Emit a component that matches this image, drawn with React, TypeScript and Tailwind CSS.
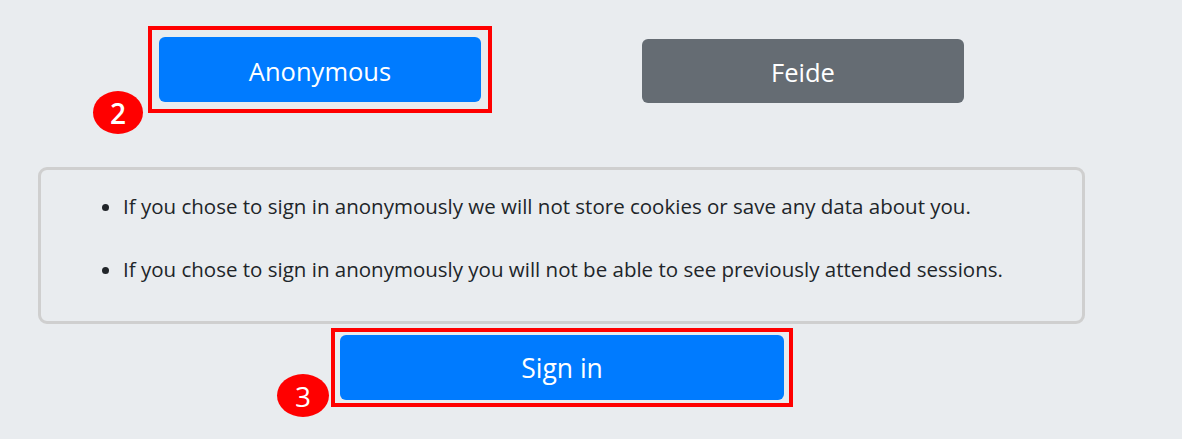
import React from 'react';

const Badge = ({ n, className }: { n: string; className: string }) => (
  <span
    className={`absolute flex h-[43px] items-center justify-center rounded-[50%] bg-[#f00] text-[28px] leading-none text-white ${className}`}
  >
    {n}
  </span>
);

const notes = [
  'If you chose to sign in anonymously we will not store cookies or save any data about you.',
  'If you chose to sign in anonymously you will not be able to see previously attended sessions.',
];

export default function App() {
  return (
    <div
      className="h-[439px] w-full overflow-hidden bg-[#e9ecef] text-[#212529]"
      style={{ fontFamily: '"Open Sans", "Noto Sans", sans-serif' }}
    >
      <div className="ml-[38px] w-[1047px] pt-[26px]">
        {/* login method choice */}
        <div className="flex items-start">
          <div className="relative ml-[110px] border-4 border-[#f00] p-[7px]">
            <button className="flex h-[65px] w-[322px] items-center justify-center rounded-[6px] bg-[#007bff] pt-[3px] text-[25.5px] text-white">
              Anonymous
            </button>
            <Badge n="2" className="left-[-59px] top-[61px] w-[50px] font-semibold" />
          </div>
          <button className="ml-[150px] mt-[13px] flex h-[64px] w-[322px] items-center justify-center rounded-[6px] bg-[#656c73] pt-[3px] text-[25.5px] text-white">
            Feide
          </button>
        </div>

        <div className="mt-[54px] rounded-[9px] border-[3px] border-[#cfcfcf] pb-[37px] pl-[42px] pt-[21px]">
          <ul className="list-disc space-y-[33px] pl-[40px] text-[20.5px] leading-[30px]">
            {notes.map((t) => (
              <li key={t}>{t}</li>
            ))}
          </ul>
        </div>

        <div className="mt-[4px] flex">
          <div className="relative ml-[293px] border-4 border-[#f00] px-[5px] py-[3px]">
            <button className="flex h-[65px] w-[444px] items-center justify-center rounded-[6px] bg-[#007bff] pt-[2px] text-[26.5px] text-white">
              Sign in
            </button>
            <Badge n="3" className="left-[-58px] top-[42px] w-[52px]" />
          </div>
        </div>
      </div>
    </div>
  );
}
